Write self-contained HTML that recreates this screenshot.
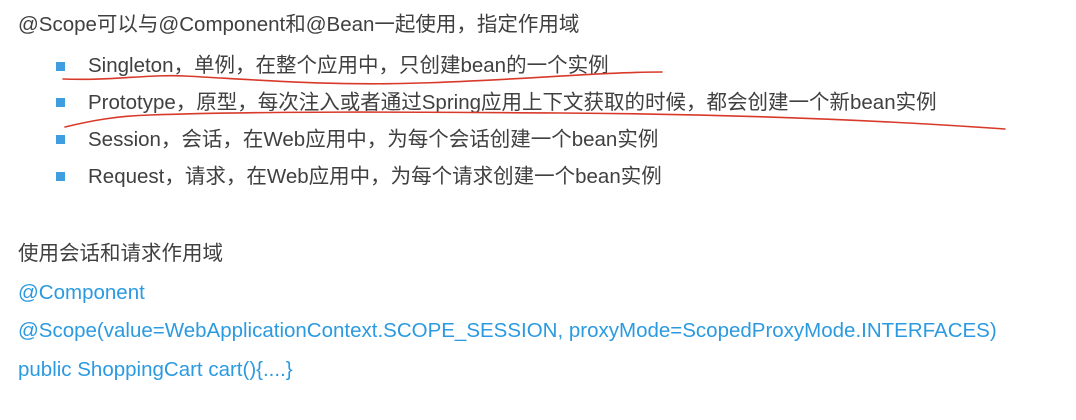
<!DOCTYPE html>
<html><head><meta charset="utf-8"><style>
html,body{margin:0;padding:0;background:#fff;width:1076px;height:420px;overflow:hidden}
body{font-family:"Liberation Sans","Noto Sans CJK SC",sans-serif;font-size:20.5px;color:#404040;position:relative}
.t{position:absolute;white-space:nowrap;line-height:24px}
.b{position:absolute;width:9px;height:9px;background:#3e9ee0}
.blue{color:#2b9ae0}
</style></head><body>
<div class="t" style="left:18px;top:13px">@Scope可以与@Component和@Bean一起使用，指定作用域</div>
<div class="b" style="left:56px;top:62px"></div>
<div class="t" style="left:88px;top:54px">Singleton，单例，在整个应用中，只创建bean的一个实例</div>
<div class="b" style="left:56px;top:98px"></div>
<div class="t" style="left:88px;top:91px">Prototype，原型，每次注入或者通过Spring应用上下文获取的时候，都会创建一个新bean实例</div>
<div class="b" style="left:56px;top:135px"></div>
<div class="t" style="left:88px;top:128px">Session，会话，在Web应用中，为每个会话创建一个bean实例</div>
<div class="b" style="left:56px;top:172px"></div>
<div class="t" style="left:88px;top:165px">Request，请求，在Web应用中，为每个请求创建一个bean实例</div>
<div class="t" style="left:18px;top:242px">使用会话和请求作用域</div>
<div class="t blue" style="left:18px;top:281px">@Component</div>
<div class="t blue" style="left:18px;top:319px">@Scope(value=WebApplicationContext.SCOPE_SESSION, proxyMode=ScopedProxyMode.INTERFACES)</div>
<div class="t blue" style="left:18px;top:358px">public ShoppingCart cart(){....}</div>
<svg width="1076" height="420" style="position:absolute;left:0;top:0" fill="none" stroke="#d83a2a" stroke-width="1.6" stroke-linecap="round">
<path d="M63 79 C110 81 150 74 185 76 C260 80 330 86 420 83 C520 80 600 72 662 72"/>
<path d="M65 127 C90 121 115 116 150 115 C260 111 420 112 560 113 C700 114 850 118 1005 129"/>
</svg>
</body></html>
